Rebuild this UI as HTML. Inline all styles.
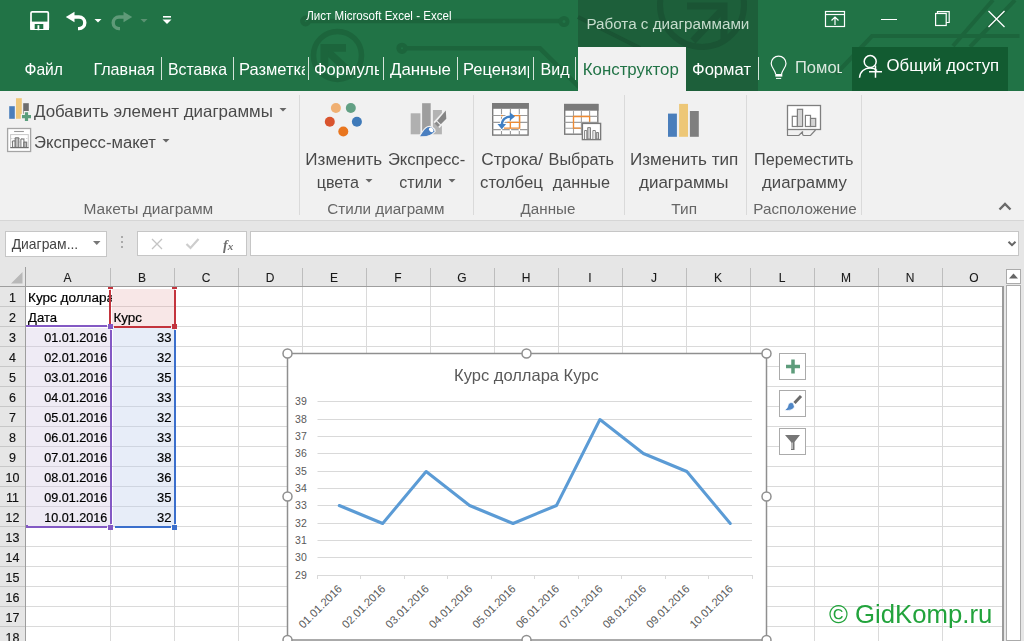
<!DOCTYPE html>
<html><head><meta charset="utf-8"><style>
html,body{margin:0;padding:0;width:1024px;height:641px;overflow:hidden;background:#fff;}
body{position:relative;font-family:"Liberation Sans",sans-serif;}
.t{position:absolute;white-space:nowrap;}
svg{overflow:visible}
svg.tx{position:absolute;overflow:hidden;will-change:transform}
</style></head><body>
<div style="position:absolute;left:0px;top:0px;width:1024px;height:91px;background:#217346"></div>
<div style="position:absolute;left:578px;top:0px;width:180px;height:91px;background:#1d5f3a"></div>
<svg style="position:absolute;left:0px;top:0px;" width="1024" height="91" viewBox="0 0 1024 91">
<g fill="none" stroke="#1c653c" stroke-width="4">
<circle cx="305.6" cy="21" r="3.2" stroke-width="4.5"/>
<line x1="309" y1="21" x2="560" y2="21" stroke-width="4.5"/>
<circle cx="564" cy="21.5" r="3.5"/>
<circle cx="402" cy="48.3" r="3.4" stroke-width="4.5"/>
<polyline points="406,48.3 540,48.3 580,88" stroke-width="4.5"/>
<circle cx="337.5" cy="55.4" r="24" stroke-width="5.5"/>
<path d="M326 50 L354 76" stroke-width="7.5"/>
<path d="M320.5 44 H346 V51.8 H328.3 V68 H320.5 Z" fill="#1c653c" stroke="none"/>
<polyline points="1015,0 970,47"/>
<polyline points="993,0 953,46"/>
<polyline points="1019.5,36 872,36 836,74"/>
</g>
<g fill="none" stroke="#1a5434" stroke-width="6">
<circle cx="702" cy="5" r="42"/>
<path d="M693 41 L722 10" stroke-width="7"/>
<path d="M687 6 H724 V41" stroke-width="7"/>
<polyline points="578,17 640,48" stroke-width="4"/>
</g>
</svg>
<svg style="position:absolute;left:28px;top:9px;" width="24" height="24" viewBox="0 0 24 24">
<rect x="3" y="2.9" width="17.3" height="17.3" rx="1.2" fill="none" stroke="#fff" stroke-width="1.7"/>
<path d="M2.2 12.6 H21 V21 H2.2 Z" fill="#fff"/>
<rect x="6.7" y="15" width="8.6" height="5" fill="#217346"/>
<rect x="9.5" y="16.2" width="1.8" height="5" fill="#fff"/>
</svg>
<svg style="position:absolute;left:63px;top:10px;" width="26" height="24" viewBox="0 0 26 24">
<path d="M9 7 H16 A5.8 5.8 0 0 1 16 18.6 H15" fill="none" stroke="#fff" stroke-width="3.4"/>
<path d="M2.8 7 L11.5 1.8 V12.2 Z" fill="#fff"/>
</svg>
<svg style="position:absolute;left:93px;top:17px;" width="12" height="8" viewBox="0 0 12 8"><path d="M1.5 2 H8.5 L5 5.5 Z" fill="#fff"/></svg>
<svg style="position:absolute;left:109px;top:10px;" width="26" height="24" viewBox="0 0 26 24">
<path d="M17 7 H10 A5.8 5.8 0 0 0 10 18.6 H11" fill="none" stroke="#5f9a78" stroke-width="3.4"/>
<path d="M23.2 7 L14.5 1.8 V12.2 Z" fill="#5f9a78"/>
</svg>
<svg style="position:absolute;left:139px;top:17px;" width="12" height="8" viewBox="0 0 12 8"><path d="M1.5 2 H8.5 L5 5.5 Z" fill="#5a9272"/></svg>
<svg style="position:absolute;left:160px;top:14px;" width="14" height="12" viewBox="0 0 14 12"><rect x="3" y="2" width="8" height="1.6" fill="#fff"/><path d="M2.5 5.5 H11.5 L7 10 Z" fill="#fff"/></svg>
<svg class="tx" style="left:303px;top:4px;" width="154" height="22"><text x="3.20" y="15.80" font-size="12.40" fill="#fff" font-family="Liberation Sans" textLength="145.3" lengthAdjust="spacingAndGlyphs">Лист Microsoft Excel - Excel</text></svg>
<svg class="tx" style="left:583px;top:9px;" width="172" height="27"><text x="3.40" y="19.70" font-size="15.22" fill="#c6dccd" font-family="Liberation Sans">Работа с диаграммами</text></svg>
<svg style="position:absolute;left:822px;top:8px;" width="26" height="22" viewBox="0 0 26 22"><rect x="3.5" y="3.5" width="19" height="15" fill="none" stroke="#fff" stroke-width="1.2"/><line x1="3.5" y1="6.5" x2="22.5" y2="6.5" stroke="#fff" stroke-width="1.2"/><path d="M13 17 V9 M9.5 12.5 L13 9 L16.5 12.5" fill="none" stroke="#fff" stroke-width="1.2"/></svg>
<div style="position:absolute;left:881px;top:18.5px;width:16px;height:1.2px;background:#fff"></div>
<svg style="position:absolute;left:932px;top:9px;" width="22" height="20" viewBox="0 0 22 20"><rect x="3.6" y="4.5" width="10.6" height="12" fill="none" stroke="#fff" stroke-width="1.2"/><path d="M5.5 4.5 V2.6 H17.2 V13.5 H14.2" fill="none" stroke="#fff" stroke-width="1.2"/></svg>
<svg style="position:absolute;left:986px;top:9px;" width="22" height="20" viewBox="0 0 22 20"><path d="M2.5 2 L18.5 18 M18.5 2 L2.5 18" stroke="#fff" stroke-width="1.3"/></svg>
<svg class="tx" style="left:21px;top:55px;" width="47" height="28"><text x="3.50" y="20.00" font-size="15.66" fill="#fff" font-family="Liberation Sans">Файл</text></svg>
<svg class="tx" style="left:90px;top:54px;" width="70" height="29"><text x="3.40" y="21.00" font-size="16.11" fill="#fff" font-family="Liberation Sans">Главная</text></svg>
<div style="position:absolute;left:161px;top:57px;width:1px;height:23px;background:#d4e3d9"></div>
<svg class="tx" style="left:165px;top:55px;" width="67" height="28"><text x="3.00" y="20.00" font-size="15.87" fill="#fff" font-family="Liberation Sans">Вставка</text></svg>
<div style="position:absolute;left:233px;top:57px;width:1px;height:23px;background:#d4e3d9"></div>
<svg class="tx" style="left:236px;top:54px;" width="69" height="29"><text x="3.00" y="21.00" font-size="16.50" fill="#fff" font-family="Liberation Sans">Разметка</text></svg>
<div style="position:absolute;left:308px;top:57px;width:1px;height:23px;background:#d4e3d9"></div>
<svg class="tx" style="left:311px;top:54px;" width="68" height="29"><text x="3.00" y="21.00" font-size="16.50" fill="#fff" font-family="Liberation Sans">Формулы</text></svg>
<div style="position:absolute;left:383px;top:57px;width:1px;height:23px;background:#d4e3d9"></div>
<svg class="tx" style="left:387px;top:53px;" width="69" height="30"><text x="3.00" y="22.00" font-size="16.88" fill="#fff" font-family="Liberation Sans">Данные</text></svg>
<div style="position:absolute;left:457px;top:57px;width:1px;height:23px;background:#d4e3d9"></div>
<svg class="tx" style="left:460px;top:54px;" width="69" height="29"><text x="3.00" y="21.00" font-size="16.50" fill="#fff" font-family="Liberation Sans">Рецензирование</text></svg>
<div style="position:absolute;left:533px;top:57px;width:1px;height:23px;background:#d4e3d9"></div>
<svg class="tx" style="left:537px;top:54px;" width="37" height="29"><text x="3.50" y="21.00" font-size="16.03" fill="#fff" font-family="Liberation Sans">Вид</text></svg>
<div style="position:absolute;left:575px;top:57px;width:1px;height:23px;background:#d4e3d9"></div>
<div style="position:absolute;left:578px;top:47px;width:108px;height:44px;background:#f1f1f1"></div>
<svg class="tx" style="left:579px;top:53px;" width="105" height="30"><text x="3.80" y="22.00" font-size="16.84" fill="#217346" font-family="Liberation Sans">Конструктор</text></svg>
<svg class="tx" style="left:689px;top:54px;" width="68" height="30"><text x="3.00" y="21.00" font-size="16.61" fill="#fff" font-family="Liberation Sans">Формат</text></svg>
<div style="position:absolute;left:758px;top:57px;width:1px;height:23px;background:#d4e3d9"></div>
<svg style="position:absolute;left:766px;top:52px;" width="24" height="30" viewBox="0 0 24 30"><path d="M9.6 22 C9.3 18.5 5.2 15.5 5.2 11.5 A7.4 7.4 0 0 1 20 11.5 C20 15.5 15.9 18.5 15.6 22" fill="none" stroke="#fff" stroke-width="1.2"/><rect x="9.3" y="22" width="7" height="2.6" fill="#fff"/><line x1="10" y1="26.4" x2="15.2" y2="26.4" stroke="#fff" stroke-width="1"/></svg>
<svg class="tx" style="left:792px;top:52px;" width="50" height="29"><text x="3.00" y="21.00" font-size="16.50" fill="#dce8df" font-family="Liberation Sans">Помощник</text></svg>
<div style="position:absolute;left:852px;top:47px;width:156px;height:44px;background:#125b31"></div>
<svg style="position:absolute;left:856px;top:53px;" width="30" height="30" viewBox="0 0 30 30"><circle cx="14.2" cy="8.6" r="6" fill="none" stroke="#fff" stroke-width="1.5"/><path d="M3.5 24.7 C4 18.5 8.5 15 14.2 15 C17 15 19.5 16 21 17.5" fill="none" stroke="#fff" stroke-width="1.5"/><path d="M19.5 12.4 V24.7 M13 18.8 H26" stroke="#fff" stroke-width="1.5"/></svg>
<svg class="tx" style="left:883px;top:50px;" width="121" height="30"><text x="3.50" y="21.20" font-size="16.77" fill="#fff" font-family="Liberation Sans">Общий доступ</text></svg>
<div style="position:absolute;left:0px;top:91px;width:1024px;height:130px;background:#f1f1f1"></div>
<div style="position:absolute;left:0px;top:220px;width:1024px;height:1px;background:#d6d6d6"></div>
<div style="position:absolute;left:299px;top:95px;width:1px;height:120px;background:#dadada"></div>
<div style="position:absolute;left:473px;top:95px;width:1px;height:120px;background:#dadada"></div>
<div style="position:absolute;left:624px;top:95px;width:1px;height:120px;background:#dadada"></div>
<div style="position:absolute;left:746px;top:95px;width:1px;height:120px;background:#dadada"></div>
<div style="position:absolute;left:861px;top:95px;width:1px;height:120px;background:#dadada"></div>
<svg style="position:absolute;left:7px;top:96px;" width="26" height="26" viewBox="0 0 26 26">
<rect x="2.2" y="10.2" width="5.6" height="12.6" fill="#4a7ebb"/>
<rect x="9" y="2.2" width="5.8" height="20.6" fill="#eec77a"/>
<rect x="16.2" y="7.2" width="5.6" height="10.5" fill="#6e6e6e"/>
<path d="M19.5 15 V26.2 M13.8 20.6 H25.2" stroke="#f1f1f1" stroke-width="5.4"/>
<path d="M19.5 16.3 V25 M15 20.6 H24" stroke="#5a9e7c" stroke-width="3.2"/>
</svg>
<svg class="tx" style="left:31px;top:95px;" width="248" height="30"><text x="3.00" y="21.60" font-size="16.92" fill="#4a4a4a" font-family="Liberation Sans">Добавить элемент диаграммы</text></svg>
<svg style="position:absolute;left:278px;top:107px;" width="10" height="6" viewBox="0 0 10 6"><path d="M1.5 1 H8.5 L5 4.5 Z" fill="#666"/></svg>
<svg style="position:absolute;left:6px;top:127px;" width="26" height="26" viewBox="0 0 26 26">
<rect x="1.6" y="1.5" width="23" height="23" fill="#fff" stroke="#a5a5a5" stroke-width="1.3"/>
<line x1="8.1" y1="4.5" x2="17.9" y2="4.5" stroke="#999" stroke-width="1.1"/>
<rect x="4.6" y="7.6" width="17.7" height="13" fill="none" stroke="#c8c8c8" stroke-width="1"/>
<path d="M5 11.5 H22 M5 15 H22" stroke="#d6d6d6" stroke-width="1" stroke-dasharray="1.5 1"/>
<path d="M6.6 20.4 V13.9 H9.2 V20.4 Z M14.9 20.4 V12 H17.9 V20.4 Z" fill="#fff" stroke="#6f6f6f" stroke-width="1"/>
<path d="M9.2 20.4 V10.8 H12.8 V20.4 Z M17.9 20.4 V15.1 H20.7 V20.4 Z" fill="#bdbdbd" stroke="#6f6f6f" stroke-width="1"/>
<line x1="4.3" y1="20.6" x2="22.6" y2="20.6" stroke="#6f6f6f" stroke-width="1.2"/>
</svg>
<svg class="tx" style="left:31px;top:126px;" width="130" height="30"><text x="3.00" y="21.70" font-size="16.65" fill="#4a4a4a" font-family="Liberation Sans">Экспресс-макет</text></svg>
<svg style="position:absolute;left:161px;top:138px;" width="10" height="6" viewBox="0 0 10 6"><path d="M1.5 1 H8.5 L5 4.5 Z" fill="#666"/></svg>
<svg class="tx" style="left:80px;top:194px;" width="138" height="28"><text x="3.50" y="19.60" font-size="15.49" fill="#666" font-family="Liberation Sans">Макеты диаграмм</text></svg>
<svg style="position:absolute;left:320px;top:98px;" width="46" height="40" viewBox="0 0 46 40">
<circle cx="15.9" cy="10" r="5" fill="#f0b072"/>
<circle cx="30.8" cy="10" r="5" fill="#62a084"/>
<circle cx="9.8" cy="23.8" r="5" fill="#d9542e"/>
<circle cx="36.9" cy="23.8" r="5" fill="#3f7ab9"/>
<circle cx="23.3" cy="33.5" r="5" fill="#e9761f"/>
</svg>
<svg class="tx" style="left:302px;top:143px;" width="85" height="30"><text x="3.30" y="22.20" font-size="17.07" fill="#4a4a4a" font-family="Liberation Sans">Изменить</text></svg>
<svg class="tx" style="left:313px;top:167px;" width="51" height="29"><text x="3.70" y="21.00" font-size="16.12" fill="#4a4a4a" font-family="Liberation Sans">цвета</text></svg>
<svg style="position:absolute;left:364px;top:177px;" width="10" height="7" viewBox="0 0 10 7"><path d="M1.5 2 H8.5 L5 5.5 Z" fill="#666"/></svg>
<svg style="position:absolute;left:405px;top:98px;" width="45" height="42" viewBox="0 0 45 42">
<rect x="5.7" y="15.3" width="9.7" height="21" fill="#b0b0b0"/>
<rect x="17.1" y="5.2" width="8.6" height="31.1" fill="#9e9e9e"/>
<rect x="27.9" y="12" width="9" height="24.3" fill="#b3b3b3"/>
<path d="M41.5 10 L42.8 21.5 L34.5 30 L28.5 24 Z" fill="#f1f1f1"/>
<path d="M40.8 12.5 L41.3 20.8 L35.8 26.3 L32.2 22.7 Z" fill="#858585"/>
<path d="M31.5 23.5 L35 27 L33 29 L29.5 25.5 Z" fill="#8a8a8a"/>
<path d="M14 38.9 C16.5 35 18.5 30.5 22.5 28.7 C25.5 27.4 29.5 29.5 30.2 33.5 C27 37.5 20.5 39.2 14 38.9 Z" fill="#4a7fc0" stroke="#f1f1f1" stroke-width="1.2"/>
<ellipse cx="26.2" cy="31.8" rx="2.6" ry="1.9" transform="rotate(45 26.2 31.8)" fill="#fff"/>
</svg>
<svg class="tx" style="left:384px;top:144px;" width="86" height="30"><text x="3.90" y="21.20" font-size="16.61" fill="#4a4a4a" font-family="Liberation Sans">Экспресс-</text></svg>
<svg class="tx" style="left:396px;top:167px;" width="51" height="29"><text x="3.30" y="21.00" font-size="16.06" fill="#4a4a4a" font-family="Liberation Sans">стили</text></svg>
<svg style="position:absolute;left:447px;top:177px;" width="10" height="7" viewBox="0 0 10 7"><path d="M1.5 2 H8.5 L5 5.5 Z" fill="#666"/></svg>
<svg class="tx" style="left:324px;top:194px;" width="126" height="27"><text x="3.20" y="19.60" font-size="15.22" fill="#666" font-family="Liberation Sans">Стили диаграмм</text></svg>
<svg style="position:absolute;left:490px;top:101px;" width="42" height="38" viewBox="0 0 42 38">
<rect x="2.7" y="2.7" width="35.4" height="31.4" fill="#fff" stroke="#7a7a7a" stroke-width="1.4"/>
<rect x="2" y="2" width="36.8" height="5.8" fill="#7a7a7a"/>
<path d="M11.5 8 V34 M20.4 8 V34 M29.3 8 V34 M2.5 14.5 H38 M2.5 21.4 H38 M2.5 28.6 H38" stroke="#9a9a9a" stroke-width="1.1"/>
<path d="M11.5 13.2 V15.8 M20.4 13.2 V15.8 M29.3 13.2 V15.8 M11.5 20.1 V22.7 M20.4 20.1 V22.7 M29.3 20.1 V22.7 M11.5 27.3 V29.9 M20.4 27.3 V29.9 M29.3 27.3 V29.9" stroke="#fff" stroke-width="1.4"/>
<path d="M11.1 14.7 H12.8 M20 14.7 H29.7 V27.2 H14" fill="none" stroke="#ee8a32" stroke-width="1.3"/>
<path d="M17.3 21.4 H29.7 M20.4 20.6 V27.2" fill="none" stroke="#ee8a32" stroke-width="1.3"/>
<path d="M11.8 24.5 C11.8 19 15.5 15.5 21 15.5" fill="none" stroke="#fff" stroke-width="4.5"/>
<path d="M11.8 24.5 C11.8 19 15.5 15.5 21 15.5" fill="none" stroke="#3f7fc4" stroke-width="2.4"/>
<path d="M25 15.5 L19.8 11.2 V19.8 Z" fill="#3f7fc4"/>
<path d="M11.8 28.2 L7.5 23 H16.1 Z" fill="#3f7fc4"/>
</svg>
<svg class="tx" style="left:478px;top:143px;" width="70" height="31"><text x="3.30" y="22.20" font-size="17.21" fill="#4a4a4a" font-family="Liberation Sans">Строка/</text></svg>
<svg class="tx" style="left:477px;top:167px;" width="71" height="30"><text x="3.00" y="21.00" font-size="16.78" fill="#4a4a4a" font-family="Liberation Sans">столбец</text></svg>
<svg style="position:absolute;left:562px;top:102px;" width="42" height="40" viewBox="0 0 42 40">
<rect x="2.7" y="2.5" width="33.1" height="29.7" fill="#fff" stroke="#7a7a7a" stroke-width="1.4"/>
<rect x="2" y="2" width="34.5" height="6.7" fill="#7a7a7a"/>
<path d="M11.5 8.7 V32 M19.4 8.7 V32 M27.6 8.7 V32 M2.5 14.4 H35.5 M2.5 20.4 H35.5 M2.5 26.2 H35.5" stroke="#a0a0a0" stroke-width="1.1"/>
<path d="M18.7 26.2 H11.5 V14.5 H27.6 V19.7" fill="none" stroke="#ee8a32" stroke-width="1.3"/>
<rect x="20.4" y="21.4" width="18.2" height="16.2" fill="#fff" stroke="#7a7a7a" stroke-width="1.4"/>
<path d="M22.6 37 V28.5 H24.8 V37 M30.9 37 V28.5 H33.3 V37" fill="#fff" stroke="#808080" stroke-width="1"/>
<path d="M25.7 37 V25.6 H28.5 V37 Z M34.3 37 V30.5 H36.5 V37 Z" fill="#cfcfcf" stroke="#808080" stroke-width="1"/>
</svg>
<svg class="tx" style="left:545px;top:144px;" width="74" height="29"><text x="3.60" y="21.20" font-size="16.24" fill="#4a4a4a" font-family="Liberation Sans">Выбрать</text></svg>
<svg class="tx" style="left:549px;top:167px;" width="66" height="29"><text x="3.80" y="21.00" font-size="16.25" fill="#4a4a4a" font-family="Liberation Sans">данные</text></svg>
<svg class="tx" style="left:517px;top:194px;" width="63" height="27"><text x="3.60" y="19.60" font-size="15.17" fill="#666" font-family="Liberation Sans">Данные</text></svg>
<svg style="position:absolute;left:664px;top:100px;" width="40" height="40" viewBox="0 0 40 40">
<rect x="4" y="13.6" width="8.9" height="23.2" fill="#4a7ebb"/>
<rect x="15.1" y="3.9" width="8.9" height="32.9" fill="#edc777"/>
<rect x="25.9" y="11" width="8.9" height="25.8" fill="#7f7f7f"/>
</svg>
<svg class="tx" style="left:626px;top:143px;" width="117" height="30"><text x="3.90" y="22.20" font-size="17.08" fill="#4a4a4a" font-family="Liberation Sans">Изменить тип</text></svg>
<svg class="tx" style="left:636px;top:166px;" width="98" height="30"><text x="3.00" y="22.00" font-size="16.99" fill="#4a4a4a" font-family="Liberation Sans">диаграммы</text></svg>
<svg class="tx" style="left:668px;top:194px;" width="34" height="27"><text x="3.30" y="19.60" font-size="15.42" fill="#666" font-family="Liberation Sans">Тип</text></svg>
<svg style="position:absolute;left:784px;top:102px;" width="40" height="36" viewBox="0 0 40 36">
<rect x="3.5" y="3.5" width="33" height="24" fill="#fff" stroke="#7f7f7f" stroke-width="1.3"/>
<rect x="8.3" y="14.3" width="5.1" height="10.2" fill="#fff" stroke="#7f7f7f" stroke-width="1.2"/>
<rect x="13.4" y="7.3" width="5.2" height="17.2" fill="#d4d4d4" stroke="#7f7f7f" stroke-width="1.2"/>
<rect x="21.4" y="13.4" width="5.1" height="11.1" fill="#fff" stroke="#7f7f7f" stroke-width="1.2"/>
<rect x="26.5" y="16.4" width="5.2" height="8.1" fill="#d4d4d4" stroke="#7f7f7f" stroke-width="1.2"/>
<path d="M3.5 27.5 V33.5 H14.8 L18.8 29.5 C18 31 18.5 33.5 20 33.5 H26.5 L31.5 28" fill="none" stroke="#7f7f7f" stroke-width="1.2"/>
</svg>
<svg class="tx" style="left:751px;top:144px;" width="108" height="29"><text x="3.00" y="21.20" font-size="16.24" fill="#4a4a4a" font-family="Liberation Sans">Переместить</text></svg>
<svg class="tx" style="left:759px;top:167px;" width="93" height="30"><text x="3.00" y="21.00" font-size="16.75" fill="#4a4a4a" font-family="Liberation Sans">диаграмму</text></svg>
<svg class="tx" style="left:750px;top:194px;" width="112" height="27"><text x="3.30" y="19.60" font-size="15.21" fill="#666" font-family="Liberation Sans">Расположение</text></svg>
<svg style="position:absolute;left:997px;top:200px;" width="16" height="12" viewBox="0 0 16 12"><path d="M2.5 9.5 L8 4 L13.5 9.5" fill="none" stroke="#6a6a6a" stroke-width="2.4"/></svg>
<div style="position:absolute;left:0px;top:221px;width:1024px;height:46px;background:#e6e6e6"></div>
<div style="position:absolute;left:5px;top:231px;width:102px;height:26px;background:#fff;border:1px solid #c6c6c6;box-sizing:border-box"></div>
<svg class="tx" style="left:8px;top:231px;" width="75" height="25"><text x="3.70" y="18.20" font-size="13.90" fill="#444" font-family="Liberation Sans">Диаграм...</text></svg>
<svg style="position:absolute;left:91px;top:239px;" width="12" height="8" viewBox="0 0 12 8"><path d="M2 2 H9.5 L5.75 6 Z" fill="#777"/></svg>
<div style="position:absolute;left:121px;top:236px;width:2px;height:2px;background:#aaa"></div>
<div style="position:absolute;left:121px;top:241px;width:2px;height:2px;background:#aaa"></div>
<div style="position:absolute;left:121px;top:246px;width:2px;height:2px;background:#aaa"></div>
<div style="position:absolute;left:137px;top:231px;width:110px;height:25px;background:#fff;border:1px solid #c6c6c6;box-sizing:border-box"></div>
<svg style="position:absolute;left:149px;top:237px;" width="16" height="14" viewBox="0 0 16 14"><path d="M3 2 L13 12 M13 2 L3 12" stroke="#c4c4c4" stroke-width="1.3"/></svg>
<svg style="position:absolute;left:184px;top:236px;" width="18" height="15" viewBox="0 0 18 15"><path d="M2.5 8 L6.5 12 L14.5 3" fill="none" stroke="#cdcdcd" stroke-width="2.2"/></svg>
<svg class="tx" style="left:220px;top:232px;" width="19" height="25"><text x="3.00" y="17.50" font-size="14.00" fill="#707070" font-family="Liberation Serif" font-weight="bold"><tspan font-style="italic">f</tspan><tspan font-style="italic" font-size="11">x</tspan></text></svg>
<div style="position:absolute;left:250px;top:231px;width:769px;height:25px;background:#fff;border:1px solid #c6c6c6;box-sizing:border-box"></div>
<svg style="position:absolute;left:1006px;top:239px;" width="12" height="10" viewBox="0 0 12 10"><path d="M2.5 2.8 L6 6.2 L9.5 2.8" fill="none" stroke="#666" stroke-width="2"/></svg>
<div style="position:absolute;left:0px;top:267px;width:1024px;height:374px;background:#fff"></div>
<div style="position:absolute;left:0px;top:267px;width:1003px;height:20px;background:#e6e6e6"></div>
<div style="position:absolute;left:0px;top:287px;width:25px;height:354px;background:#e6e6e6"></div>
<div style="position:absolute;left:1003px;top:267px;width:21px;height:374px;background:#e6e6e6"></div>
<svg style="position:absolute;left:8px;top:269px;" width="18" height="17" viewBox="0 0 18 17"><path d="M3 14.5 H14.5 V3 Z" fill="#b8b8b8"/></svg>
<div style="position:absolute;left:110px;top:287px;width:1px;height:354px;background:#dadada"></div>
<div style="position:absolute;left:110px;top:268px;width:1px;height:18px;background:#bdbdbd"></div>
<svg class="tx" style="left:60px;top:266px;" width="17" height="21"><text x="3.50" y="15.60" font-size="12.00" fill="#1a1a1a" font-family="Liberation Sans" stroke="#1a1a1a" stroke-width="0.1">A</text></svg>
<div style="position:absolute;left:174px;top:287px;width:1px;height:354px;background:#dadada"></div>
<div style="position:absolute;left:174px;top:268px;width:1px;height:18px;background:#bdbdbd"></div>
<svg class="tx" style="left:134px;top:266px;" width="17" height="21"><text x="4.00" y="15.60" font-size="12.00" fill="#1a1a1a" font-family="Liberation Sans" stroke="#1a1a1a" stroke-width="0.1">B</text></svg>
<div style="position:absolute;left:238px;top:287px;width:1px;height:354px;background:#dadada"></div>
<div style="position:absolute;left:238px;top:268px;width:1px;height:18px;background:#bdbdbd"></div>
<svg class="tx" style="left:198px;top:266px;" width="17" height="21"><text x="3.67" y="15.60" font-size="12.00" fill="#1a1a1a" font-family="Liberation Sans" stroke="#1a1a1a" stroke-width="0.1">C</text></svg>
<div style="position:absolute;left:302px;top:287px;width:1px;height:354px;background:#dadada"></div>
<div style="position:absolute;left:302px;top:268px;width:1px;height:18px;background:#bdbdbd"></div>
<svg class="tx" style="left:262px;top:266px;" width="17" height="21"><text x="3.67" y="15.60" font-size="12.00" fill="#1a1a1a" font-family="Liberation Sans" stroke="#1a1a1a" stroke-width="0.1">D</text></svg>
<div style="position:absolute;left:366px;top:287px;width:1px;height:354px;background:#dadada"></div>
<div style="position:absolute;left:366px;top:268px;width:1px;height:18px;background:#bdbdbd"></div>
<svg class="tx" style="left:326px;top:266px;" width="17" height="21"><text x="4.00" y="15.60" font-size="12.00" fill="#1a1a1a" font-family="Liberation Sans" stroke="#1a1a1a" stroke-width="0.1">E</text></svg>
<div style="position:absolute;left:430px;top:287px;width:1px;height:354px;background:#dadada"></div>
<div style="position:absolute;left:430px;top:268px;width:1px;height:18px;background:#bdbdbd"></div>
<svg class="tx" style="left:391px;top:266px;" width="16" height="21"><text x="3.33" y="15.60" font-size="12.00" fill="#1a1a1a" font-family="Liberation Sans" stroke="#1a1a1a" stroke-width="0.1">F</text></svg>
<div style="position:absolute;left:494px;top:287px;width:1px;height:354px;background:#dadada"></div>
<div style="position:absolute;left:494px;top:268px;width:1px;height:18px;background:#bdbdbd"></div>
<svg class="tx" style="left:454px;top:266px;" width="18" height="21"><text x="3.33" y="15.60" font-size="12.00" fill="#1a1a1a" font-family="Liberation Sans" stroke="#1a1a1a" stroke-width="0.1">G</text></svg>
<div style="position:absolute;left:558px;top:287px;width:1px;height:354px;background:#dadada"></div>
<div style="position:absolute;left:558px;top:268px;width:1px;height:18px;background:#bdbdbd"></div>
<svg class="tx" style="left:518px;top:266px;" width="17" height="21"><text x="3.67" y="15.60" font-size="12.00" fill="#1a1a1a" font-family="Liberation Sans" stroke="#1a1a1a" stroke-width="0.1">H</text></svg>
<div style="position:absolute;left:622px;top:287px;width:1px;height:354px;background:#dadada"></div>
<div style="position:absolute;left:622px;top:268px;width:1px;height:18px;background:#bdbdbd"></div>
<svg class="tx" style="left:585px;top:266px;" width="12" height="21"><text x="3.33" y="15.60" font-size="12.00" fill="#1a1a1a" font-family="Liberation Sans" stroke="#1a1a1a" stroke-width="0.1">I</text></svg>
<div style="position:absolute;left:686px;top:287px;width:1px;height:354px;background:#dadada"></div>
<div style="position:absolute;left:686px;top:268px;width:1px;height:18px;background:#bdbdbd"></div>
<svg class="tx" style="left:648px;top:266px;" width="14" height="21"><text x="3.00" y="15.60" font-size="12.00" fill="#1a1a1a" font-family="Liberation Sans" stroke="#1a1a1a" stroke-width="0.1">J</text></svg>
<div style="position:absolute;left:750px;top:287px;width:1px;height:354px;background:#dadada"></div>
<div style="position:absolute;left:750px;top:268px;width:1px;height:18px;background:#bdbdbd"></div>
<svg class="tx" style="left:710px;top:266px;" width="17" height="21"><text x="4.00" y="15.60" font-size="12.00" fill="#1a1a1a" font-family="Liberation Sans" stroke="#1a1a1a" stroke-width="0.1">K</text></svg>
<div style="position:absolute;left:814px;top:287px;width:1px;height:354px;background:#dadada"></div>
<div style="position:absolute;left:814px;top:268px;width:1px;height:18px;background:#bdbdbd"></div>
<svg class="tx" style="left:775px;top:266px;" width="15" height="21"><text x="3.66" y="15.60" font-size="12.00" fill="#1a1a1a" font-family="Liberation Sans" stroke="#1a1a1a" stroke-width="0.1">L</text></svg>
<div style="position:absolute;left:878px;top:287px;width:1px;height:354px;background:#dadada"></div>
<div style="position:absolute;left:878px;top:268px;width:1px;height:18px;background:#bdbdbd"></div>
<svg class="tx" style="left:838px;top:266px;" width="18" height="21"><text x="3.00" y="15.60" font-size="12.00" fill="#1a1a1a" font-family="Liberation Sans" stroke="#1a1a1a" stroke-width="0.1">M</text></svg>
<div style="position:absolute;left:942px;top:287px;width:1px;height:354px;background:#dadada"></div>
<div style="position:absolute;left:942px;top:268px;width:1px;height:18px;background:#bdbdbd"></div>
<svg class="tx" style="left:902px;top:266px;" width="17" height="21"><text x="3.67" y="15.60" font-size="12.00" fill="#1a1a1a" font-family="Liberation Sans" stroke="#1a1a1a" stroke-width="0.1">N</text></svg>
<svg class="tx" style="left:966px;top:266px;" width="18" height="21"><text x="3.33" y="15.60" font-size="12.00" fill="#1a1a1a" font-family="Liberation Sans" stroke="#1a1a1a" stroke-width="0.1">O</text></svg>
<div style="position:absolute;left:26px;top:306px;width:977px;height:1px;background:#dadada"></div>
<div style="position:absolute;left:0px;top:306px;width:25px;height:1px;background:#c8c8c8"></div>
<svg class="tx" style="left:6px;top:286px;" width="15" height="22"><text x="3.02" y="16.00" font-size="12.50" fill="#111" font-family="Liberation Sans" stroke="#111" stroke-width="0.15">1</text></svg>
<div style="position:absolute;left:26px;top:326px;width:977px;height:1px;background:#dadada"></div>
<div style="position:absolute;left:0px;top:326px;width:25px;height:1px;background:#c8c8c8"></div>
<svg class="tx" style="left:6px;top:306px;" width="15" height="22"><text x="3.02" y="16.00" font-size="12.50" fill="#111" font-family="Liberation Sans" stroke="#111" stroke-width="0.15">2</text></svg>
<div style="position:absolute;left:26px;top:346px;width:977px;height:1px;background:#dadada"></div>
<div style="position:absolute;left:0px;top:346px;width:25px;height:1px;background:#c8c8c8"></div>
<svg class="tx" style="left:6px;top:326px;" width="15" height="22"><text x="3.02" y="16.00" font-size="12.50" fill="#111" font-family="Liberation Sans" stroke="#111" stroke-width="0.15">3</text></svg>
<div style="position:absolute;left:26px;top:366px;width:977px;height:1px;background:#dadada"></div>
<div style="position:absolute;left:0px;top:366px;width:25px;height:1px;background:#c8c8c8"></div>
<svg class="tx" style="left:6px;top:346px;" width="15" height="22"><text x="3.02" y="16.00" font-size="12.50" fill="#111" font-family="Liberation Sans" stroke="#111" stroke-width="0.15">4</text></svg>
<div style="position:absolute;left:26px;top:386px;width:977px;height:1px;background:#dadada"></div>
<div style="position:absolute;left:0px;top:386px;width:25px;height:1px;background:#c8c8c8"></div>
<svg class="tx" style="left:6px;top:366px;" width="15" height="22"><text x="3.02" y="16.00" font-size="12.50" fill="#111" font-family="Liberation Sans" stroke="#111" stroke-width="0.15">5</text></svg>
<div style="position:absolute;left:26px;top:406px;width:977px;height:1px;background:#dadada"></div>
<div style="position:absolute;left:0px;top:406px;width:25px;height:1px;background:#c8c8c8"></div>
<svg class="tx" style="left:6px;top:386px;" width="15" height="22"><text x="3.02" y="16.00" font-size="12.50" fill="#111" font-family="Liberation Sans" stroke="#111" stroke-width="0.15">6</text></svg>
<div style="position:absolute;left:26px;top:426px;width:977px;height:1px;background:#dadada"></div>
<div style="position:absolute;left:0px;top:426px;width:25px;height:1px;background:#c8c8c8"></div>
<svg class="tx" style="left:6px;top:406px;" width="15" height="22"><text x="3.02" y="16.00" font-size="12.50" fill="#111" font-family="Liberation Sans" stroke="#111" stroke-width="0.15">7</text></svg>
<div style="position:absolute;left:26px;top:446px;width:977px;height:1px;background:#dadada"></div>
<div style="position:absolute;left:0px;top:446px;width:25px;height:1px;background:#c8c8c8"></div>
<svg class="tx" style="left:6px;top:426px;" width="15" height="22"><text x="3.02" y="16.00" font-size="12.50" fill="#111" font-family="Liberation Sans" stroke="#111" stroke-width="0.15">8</text></svg>
<div style="position:absolute;left:26px;top:466px;width:977px;height:1px;background:#dadada"></div>
<div style="position:absolute;left:0px;top:466px;width:25px;height:1px;background:#c8c8c8"></div>
<svg class="tx" style="left:6px;top:446px;" width="15" height="22"><text x="3.02" y="16.00" font-size="12.50" fill="#111" font-family="Liberation Sans" stroke="#111" stroke-width="0.15">9</text></svg>
<div style="position:absolute;left:26px;top:486px;width:977px;height:1px;background:#dadada"></div>
<div style="position:absolute;left:0px;top:486px;width:25px;height:1px;background:#c8c8c8"></div>
<svg class="tx" style="left:2px;top:466px;" width="22" height="22"><text x="3.55" y="16.00" font-size="12.50" fill="#111" font-family="Liberation Sans" stroke="#111" stroke-width="0.15">10</text></svg>
<div style="position:absolute;left:26px;top:506px;width:977px;height:1px;background:#dadada"></div>
<div style="position:absolute;left:0px;top:506px;width:25px;height:1px;background:#c8c8c8"></div>
<svg class="tx" style="left:3px;top:486px;" width="21" height="22"><text x="3.01" y="16.00" font-size="12.50" fill="#111" font-family="Liberation Sans" stroke="#111" stroke-width="0.15">11</text></svg>
<div style="position:absolute;left:26px;top:526px;width:977px;height:1px;background:#dadada"></div>
<div style="position:absolute;left:0px;top:526px;width:25px;height:1px;background:#c8c8c8"></div>
<svg class="tx" style="left:2px;top:506px;" width="22" height="22"><text x="3.55" y="16.00" font-size="12.50" fill="#111" font-family="Liberation Sans" stroke="#111" stroke-width="0.15">12</text></svg>
<div style="position:absolute;left:26px;top:546px;width:977px;height:1px;background:#dadada"></div>
<div style="position:absolute;left:0px;top:546px;width:25px;height:1px;background:#c8c8c8"></div>
<svg class="tx" style="left:2px;top:526px;" width="22" height="22"><text x="3.55" y="16.00" font-size="12.50" fill="#111" font-family="Liberation Sans" stroke="#111" stroke-width="0.15">13</text></svg>
<div style="position:absolute;left:26px;top:566px;width:977px;height:1px;background:#dadada"></div>
<div style="position:absolute;left:0px;top:566px;width:25px;height:1px;background:#c8c8c8"></div>
<svg class="tx" style="left:2px;top:546px;" width="22" height="22"><text x="3.55" y="16.00" font-size="12.50" fill="#111" font-family="Liberation Sans" stroke="#111" stroke-width="0.15">14</text></svg>
<div style="position:absolute;left:26px;top:586px;width:977px;height:1px;background:#dadada"></div>
<div style="position:absolute;left:0px;top:586px;width:25px;height:1px;background:#c8c8c8"></div>
<svg class="tx" style="left:2px;top:566px;" width="22" height="22"><text x="3.55" y="16.00" font-size="12.50" fill="#111" font-family="Liberation Sans" stroke="#111" stroke-width="0.15">15</text></svg>
<div style="position:absolute;left:26px;top:606px;width:977px;height:1px;background:#dadada"></div>
<div style="position:absolute;left:0px;top:606px;width:25px;height:1px;background:#c8c8c8"></div>
<svg class="tx" style="left:2px;top:586px;" width="22" height="22"><text x="3.55" y="16.00" font-size="12.50" fill="#111" font-family="Liberation Sans" stroke="#111" stroke-width="0.15">16</text></svg>
<div style="position:absolute;left:26px;top:626px;width:977px;height:1px;background:#dadada"></div>
<div style="position:absolute;left:0px;top:626px;width:25px;height:1px;background:#c8c8c8"></div>
<svg class="tx" style="left:2px;top:606px;" width="22" height="22"><text x="3.55" y="16.00" font-size="12.50" fill="#111" font-family="Liberation Sans" stroke="#111" stroke-width="0.15">17</text></svg>
<div style="position:absolute;left:26px;top:646px;width:977px;height:1px;background:#dadada"></div>
<div style="position:absolute;left:0px;top:646px;width:25px;height:1px;background:#c8c8c8"></div>
<svg class="tx" style="left:2px;top:626px;" width="22" height="22"><text x="3.55" y="16.00" font-size="12.50" fill="#111" font-family="Liberation Sans" stroke="#111" stroke-width="0.15">18</text></svg>
<div style="position:absolute;left:0px;top:286px;width:1003px;height:1px;background:#9e9e9e"></div>
<div style="position:absolute;left:25px;top:267px;width:1px;height:374px;background:#9e9e9e"></div>
<div style="position:absolute;left:1002px;top:286px;width:2px;height:355px;background:#9a9a9a"></div>
<div style="position:absolute;left:1006px;top:269px;width:15px;height:15px;background:#fff;border:1px solid #ababab;box-sizing:border-box"></div>
<svg style="position:absolute;left:1008px;top:272px;" width="11" height="8" viewBox="0 0 11 8"><path d="M1 6.5 L5.5 1.5 L10 6.5 Z" fill="#666"/></svg>
<div style="position:absolute;left:1006px;top:285px;width:15px;height:356px;background:#fff;border:1px solid #ababab;box-sizing:border-box"></div>
<div style="position:absolute;left:112px;top:289px;width:62px;height:37px;background:#f8e7e7"></div>
<div style="position:absolute;left:112px;top:306px;width:62px;height:1px;background:#dccaca"></div>
<div style="position:absolute;left:26px;top:328px;width:84px;height:198px;background:#efebf5"></div>
<div style="position:absolute;left:113px;top:328px;width:61px;height:198px;background:#e7edf8"></div>
<div style="position:absolute;left:26px;top:346px;width:84px;height:1px;background:#d6d2dc"></div>
<div style="position:absolute;left:113px;top:346px;width:61px;height:1px;background:#cfd5e0"></div>
<div style="position:absolute;left:26px;top:366px;width:84px;height:1px;background:#d6d2dc"></div>
<div style="position:absolute;left:113px;top:366px;width:61px;height:1px;background:#cfd5e0"></div>
<div style="position:absolute;left:26px;top:386px;width:84px;height:1px;background:#d6d2dc"></div>
<div style="position:absolute;left:113px;top:386px;width:61px;height:1px;background:#cfd5e0"></div>
<div style="position:absolute;left:26px;top:406px;width:84px;height:1px;background:#d6d2dc"></div>
<div style="position:absolute;left:113px;top:406px;width:61px;height:1px;background:#cfd5e0"></div>
<div style="position:absolute;left:26px;top:426px;width:84px;height:1px;background:#d6d2dc"></div>
<div style="position:absolute;left:113px;top:426px;width:61px;height:1px;background:#cfd5e0"></div>
<div style="position:absolute;left:26px;top:446px;width:84px;height:1px;background:#d6d2dc"></div>
<div style="position:absolute;left:113px;top:446px;width:61px;height:1px;background:#cfd5e0"></div>
<div style="position:absolute;left:26px;top:466px;width:84px;height:1px;background:#d6d2dc"></div>
<div style="position:absolute;left:113px;top:466px;width:61px;height:1px;background:#cfd5e0"></div>
<div style="position:absolute;left:26px;top:486px;width:84px;height:1px;background:#d6d2dc"></div>
<div style="position:absolute;left:113px;top:486px;width:61px;height:1px;background:#cfd5e0"></div>
<div style="position:absolute;left:26px;top:506px;width:84px;height:1px;background:#d6d2dc"></div>
<div style="position:absolute;left:113px;top:506px;width:61px;height:1px;background:#cfd5e0"></div>
<svg class="tx" style="left:25px;top:284px;" width="87" height="24"><text x="3.10" y="17.80" font-size="13.53" fill="#000" font-family="Liberation Sans" stroke="#000" stroke-width="0.2">Курс доллара</text></svg>
<svg class="tx" style="left:25px;top:305px;" width="37" height="23"><text x="3.10" y="16.80" font-size="13.10" fill="#000" font-family="Liberation Sans" stroke="#000" stroke-width="0.2">Дата</text></svg>
<svg class="tx" style="left:110px;top:304px;" width="37" height="24"><text x="3.40" y="17.80" font-size="13.44" fill="#000" font-family="Liberation Sans" stroke="#000" stroke-width="0.2">Курс</text></svg>
<svg class="tx" style="left:41px;top:326px;" width="71" height="22"><text x="3.30" y="16.30" font-size="12.57" fill="#000" font-family="Liberation Sans" stroke="#000" stroke-width="0.2">01.01.2016</text></svg>
<svg class="tx" style="left:153px;top:326px;" width="23" height="23"><text x="3.94" y="16.30" font-size="13.00" fill="#000" font-family="Liberation Sans" stroke="#000" stroke-width="0.2">33</text></svg>
<svg class="tx" style="left:41px;top:346px;" width="71" height="22"><text x="3.30" y="16.30" font-size="12.57" fill="#000" font-family="Liberation Sans" stroke="#000" stroke-width="0.2">02.01.2016</text></svg>
<svg class="tx" style="left:153px;top:346px;" width="23" height="23"><text x="3.94" y="16.30" font-size="13.00" fill="#000" font-family="Liberation Sans" stroke="#000" stroke-width="0.2">32</text></svg>
<svg class="tx" style="left:41px;top:366px;" width="71" height="22"><text x="3.30" y="16.30" font-size="12.57" fill="#000" font-family="Liberation Sans" stroke="#000" stroke-width="0.2">03.01.2016</text></svg>
<svg class="tx" style="left:153px;top:366px;" width="23" height="23"><text x="3.94" y="16.30" font-size="13.00" fill="#000" font-family="Liberation Sans" stroke="#000" stroke-width="0.2">35</text></svg>
<svg class="tx" style="left:41px;top:386px;" width="71" height="22"><text x="3.30" y="16.30" font-size="12.57" fill="#000" font-family="Liberation Sans" stroke="#000" stroke-width="0.2">04.01.2016</text></svg>
<svg class="tx" style="left:153px;top:386px;" width="23" height="23"><text x="3.94" y="16.30" font-size="13.00" fill="#000" font-family="Liberation Sans" stroke="#000" stroke-width="0.2">33</text></svg>
<svg class="tx" style="left:41px;top:406px;" width="71" height="22"><text x="3.30" y="16.30" font-size="12.57" fill="#000" font-family="Liberation Sans" stroke="#000" stroke-width="0.2">05.01.2016</text></svg>
<svg class="tx" style="left:153px;top:406px;" width="23" height="23"><text x="3.94" y="16.30" font-size="13.00" fill="#000" font-family="Liberation Sans" stroke="#000" stroke-width="0.2">32</text></svg>
<svg class="tx" style="left:41px;top:426px;" width="71" height="22"><text x="3.30" y="16.30" font-size="12.57" fill="#000" font-family="Liberation Sans" stroke="#000" stroke-width="0.2">06.01.2016</text></svg>
<svg class="tx" style="left:153px;top:426px;" width="23" height="23"><text x="3.94" y="16.30" font-size="13.00" fill="#000" font-family="Liberation Sans" stroke="#000" stroke-width="0.2">33</text></svg>
<svg class="tx" style="left:41px;top:446px;" width="71" height="22"><text x="3.30" y="16.30" font-size="12.57" fill="#000" font-family="Liberation Sans" stroke="#000" stroke-width="0.2">07.01.2016</text></svg>
<svg class="tx" style="left:153px;top:446px;" width="23" height="23"><text x="3.94" y="16.30" font-size="13.00" fill="#000" font-family="Liberation Sans" stroke="#000" stroke-width="0.2">38</text></svg>
<svg class="tx" style="left:41px;top:466px;" width="71" height="22"><text x="3.30" y="16.30" font-size="12.57" fill="#000" font-family="Liberation Sans" stroke="#000" stroke-width="0.2">08.01.2016</text></svg>
<svg class="tx" style="left:153px;top:466px;" width="23" height="23"><text x="3.94" y="16.30" font-size="13.00" fill="#000" font-family="Liberation Sans" stroke="#000" stroke-width="0.2">36</text></svg>
<svg class="tx" style="left:41px;top:486px;" width="71" height="22"><text x="3.30" y="16.30" font-size="12.57" fill="#000" font-family="Liberation Sans" stroke="#000" stroke-width="0.2">09.01.2016</text></svg>
<svg class="tx" style="left:153px;top:486px;" width="23" height="23"><text x="3.94" y="16.30" font-size="13.00" fill="#000" font-family="Liberation Sans" stroke="#000" stroke-width="0.2">35</text></svg>
<svg class="tx" style="left:41px;top:506px;" width="71" height="22"><text x="3.30" y="16.30" font-size="12.57" fill="#000" font-family="Liberation Sans" stroke="#000" stroke-width="0.2">10.01.2016</text></svg>
<svg class="tx" style="left:153px;top:506px;" width="23" height="23"><text x="3.94" y="16.30" font-size="13.00" fill="#000" font-family="Liberation Sans" stroke="#000" stroke-width="0.2">32</text></svg>
<div style="position:absolute;left:109px;top:290px;width:2px;height:34px;background:#c3343d"></div>
<div style="position:absolute;left:174px;top:290px;width:2px;height:34px;background:#c3343d"></div>
<div style="position:absolute;left:108px;top:287px;width:5px;height:2px;background:#c3343d"></div>
<div style="position:absolute;left:172px;top:287px;width:5px;height:2px;background:#c3343d"></div>
<div style="position:absolute;left:114px;top:326px;width:57px;height:2px;background:#c3343d"></div>
<div style="position:absolute;left:172px;top:324px;width:5px;height:5px;background:#c3343d"></div>
<div style="position:absolute;left:26px;top:325px;width:81px;height:2px;background:#8359c4"></div>
<div style="position:absolute;left:26px;top:325px;width:2px;height:2px;background:#8359c4"></div>
<div style="position:absolute;left:108px;top:324px;width:5px;height:5px;background:#8359c4"></div>
<div style="position:absolute;left:110px;top:330px;width:2px;height:194px;background:#8359c4"></div>
<div style="position:absolute;left:28px;top:526px;width:79px;height:2px;background:#8359c4"></div>
<div style="position:absolute;left:26px;top:525px;width:2px;height:3px;background:#8359c4"></div>
<div style="position:absolute;left:108px;top:525px;width:5px;height:5px;background:#8359c4"></div>
<div style="position:absolute;left:174px;top:330px;width:2px;height:194px;background:#3b6fcc"></div>
<div style="position:absolute;left:115px;top:526px;width:56px;height:2px;background:#3b6fcc"></div>
<div style="position:absolute;left:172px;top:525px;width:5px;height:5px;background:#3b6fcc"></div>
<svg style="position:absolute;left:0px;top:0px;font-family:"Liberation Sans",sans-serif;" width="1024" height="641" viewBox="0 0 1024 641"><rect x="287.5" y="353.5" width="479.0" height="287.5" fill="#fff"/><rect x="287.5" y="353.5" width="479.0" height="286.5" fill="none" stroke="#8f8f8f" stroke-width="1.5"/><line x1="317.5" y1="575.50" x2="752" y2="575.50" stroke="#d9d9d9" stroke-width="1"/><text x="306.8" y="578.90" text-anchor="end" font-size="10.5" fill="#595959">29</text><line x1="317.5" y1="557.50" x2="752" y2="557.50" stroke="#d9d9d9" stroke-width="1"/><text x="306.8" y="560.90" text-anchor="end" font-size="10.5" fill="#595959">30</text><line x1="317.5" y1="540.50" x2="752" y2="540.50" stroke="#d9d9d9" stroke-width="1"/><text x="306.8" y="543.90" text-anchor="end" font-size="10.5" fill="#595959">31</text><line x1="317.5" y1="523.50" x2="752" y2="523.50" stroke="#d9d9d9" stroke-width="1"/><text x="306.8" y="526.90" text-anchor="end" font-size="10.5" fill="#595959">32</text><line x1="317.5" y1="505.50" x2="752" y2="505.50" stroke="#d9d9d9" stroke-width="1"/><text x="306.8" y="508.90" text-anchor="end" font-size="10.5" fill="#595959">33</text><line x1="317.5" y1="488.50" x2="752" y2="488.50" stroke="#d9d9d9" stroke-width="1"/><text x="306.8" y="491.90" text-anchor="end" font-size="10.5" fill="#595959">34</text><line x1="317.5" y1="471.50" x2="752" y2="471.50" stroke="#d9d9d9" stroke-width="1"/><text x="306.8" y="474.90" text-anchor="end" font-size="10.5" fill="#595959">35</text><line x1="317.5" y1="453.50" x2="752" y2="453.50" stroke="#d9d9d9" stroke-width="1"/><text x="306.8" y="456.90" text-anchor="end" font-size="10.5" fill="#595959">36</text><line x1="317.5" y1="436.50" x2="752" y2="436.50" stroke="#d9d9d9" stroke-width="1"/><text x="306.8" y="439.90" text-anchor="end" font-size="10.5" fill="#595959">37</text><line x1="317.5" y1="419.50" x2="752" y2="419.50" stroke="#d9d9d9" stroke-width="1"/><text x="306.8" y="422.90" text-anchor="end" font-size="10.5" fill="#595959">38</text><line x1="317.5" y1="401.50" x2="752" y2="401.50" stroke="#d9d9d9" stroke-width="1"/><text x="306.8" y="404.90" text-anchor="end" font-size="10.5" fill="#595959">39</text><line x1="317.50" y1="575" x2="317.50" y2="579" stroke="#d9d9d9" stroke-width="1"/><line x1="360.50" y1="575" x2="360.50" y2="579" stroke="#d9d9d9" stroke-width="1"/><line x1="404.50" y1="575" x2="404.50" y2="579" stroke="#d9d9d9" stroke-width="1"/><line x1="447.50" y1="575" x2="447.50" y2="579" stroke="#d9d9d9" stroke-width="1"/><line x1="491.50" y1="575" x2="491.50" y2="579" stroke="#d9d9d9" stroke-width="1"/><line x1="534.50" y1="575" x2="534.50" y2="579" stroke="#d9d9d9" stroke-width="1"/><line x1="578.50" y1="575" x2="578.50" y2="579" stroke="#d9d9d9" stroke-width="1"/><line x1="621.50" y1="575" x2="621.50" y2="579" stroke="#d9d9d9" stroke-width="1"/><line x1="665.50" y1="575" x2="665.50" y2="579" stroke="#d9d9d9" stroke-width="1"/><line x1="708.50" y1="575" x2="708.50" y2="579" stroke="#d9d9d9" stroke-width="1"/><line x1="752.50" y1="575" x2="752.50" y2="579" stroke="#d9d9d9" stroke-width="1"/><text transform="translate(342.73,589.50) rotate(-45)" text-anchor="end" font-size="11.2" fill="#595959">01.01.2016</text><text transform="translate(386.18,589.50) rotate(-45)" text-anchor="end" font-size="11.2" fill="#595959">02.01.2016</text><text transform="translate(429.62,589.50) rotate(-45)" text-anchor="end" font-size="11.2" fill="#595959">03.01.2016</text><text transform="translate(473.08,589.50) rotate(-45)" text-anchor="end" font-size="11.2" fill="#595959">04.01.2016</text><text transform="translate(516.52,589.50) rotate(-45)" text-anchor="end" font-size="11.2" fill="#595959">05.01.2016</text><text transform="translate(559.98,589.50) rotate(-45)" text-anchor="end" font-size="11.2" fill="#595959">06.01.2016</text><text transform="translate(603.42,589.50) rotate(-45)" text-anchor="end" font-size="11.2" fill="#595959">07.01.2016</text><text transform="translate(646.88,589.50) rotate(-45)" text-anchor="end" font-size="11.2" fill="#595959">08.01.2016</text><text transform="translate(690.33,589.50) rotate(-45)" text-anchor="end" font-size="11.2" fill="#595959">09.01.2016</text><text transform="translate(733.78,589.50) rotate(-45)" text-anchor="end" font-size="11.2" fill="#595959">10.01.2016</text><polyline points="339.23,505.50 382.68,523.50 426.12,471.50 469.58,505.50 513.02,523.50 556.48,505.50 599.92,419.50 643.38,453.50 686.83,471.50 730.28,523.50" fill="none" stroke="#5b9bd5" stroke-width="3" stroke-linejoin="round" stroke-linecap="round"/><text x="526.4" y="380.7" text-anchor="middle" font-size="16.5" fill="#595959">Курс доллара Курс</text><circle cx="287.5" cy="353.5" r="4.5" fill="#fff" stroke="#8f8f8f" stroke-width="1.5"/><circle cx="526.5" cy="353.5" r="4.5" fill="#fff" stroke="#8f8f8f" stroke-width="1.5"/><circle cx="766.5" cy="353.5" r="4.5" fill="#fff" stroke="#8f8f8f" stroke-width="1.5"/><circle cx="287.5" cy="496.5" r="4.5" fill="#fff" stroke="#8f8f8f" stroke-width="1.5"/><circle cx="766.5" cy="496.5" r="4.5" fill="#fff" stroke="#8f8f8f" stroke-width="1.5"/><circle cx="287.5" cy="640" r="4.5" fill="#fff" stroke="#8f8f8f" stroke-width="1.5"/><circle cx="526.5" cy="640" r="4.5" fill="#fff" stroke="#8f8f8f" stroke-width="1.5"/><circle cx="766.5" cy="640" r="4.5" fill="#fff" stroke="#8f8f8f" stroke-width="1.5"/></svg>
<div style="position:absolute;left:779px;top:353px;width:27px;height:27px;background:#fff;border:1px solid #ababab;box-sizing:border-box"></div>
<svg style="position:absolute;left:779px;top:353px;" width="27" height="27" viewBox="0 0 27 27"><path d="M14 6.5 V20.5 M7 13.5 H21" stroke="#5d9c7b" stroke-width="3.5"/></svg>
<div style="position:absolute;left:779px;top:390px;width:27px;height:27px;background:#fff;border:1px solid #ababab;box-sizing:border-box"></div>
<svg style="position:absolute;left:779px;top:390px;" width="27" height="27" viewBox="0 0 27 27"><path d="M22 6 L15.5 13" stroke="#6b6b6b" stroke-width="3"/><path d="M14.5 13.5 C12 11.5 9.5 13 9 15.5 C8.5 18 7 19.5 5 20.5 C9.5 21 14 20 15.5 17 Z" fill="#4f86c6" stroke="#fff" stroke-width=".8"/></svg>
<div style="position:absolute;left:779px;top:428px;width:27px;height:27px;background:#fff;border:1px solid #ababab;box-sizing:border-box"></div>
<svg style="position:absolute;left:779px;top:428px;" width="27" height="27" viewBox="0 0 27 27"><path d="M6 7 H21 L15.5 14 V22 H12 V14 Z" fill="#767676"/><path d="M13 14.5 V21" stroke="#fff" stroke-width="1"/></svg>
<svg class="tx" style="left:826px;top:590px;" width="172" height="46"><text x="3.00" y="32.90" font-size="25.72" fill="#22a33c" font-family="Liberation Sans">© GidKomp.ru</text></svg>
</body></html>
